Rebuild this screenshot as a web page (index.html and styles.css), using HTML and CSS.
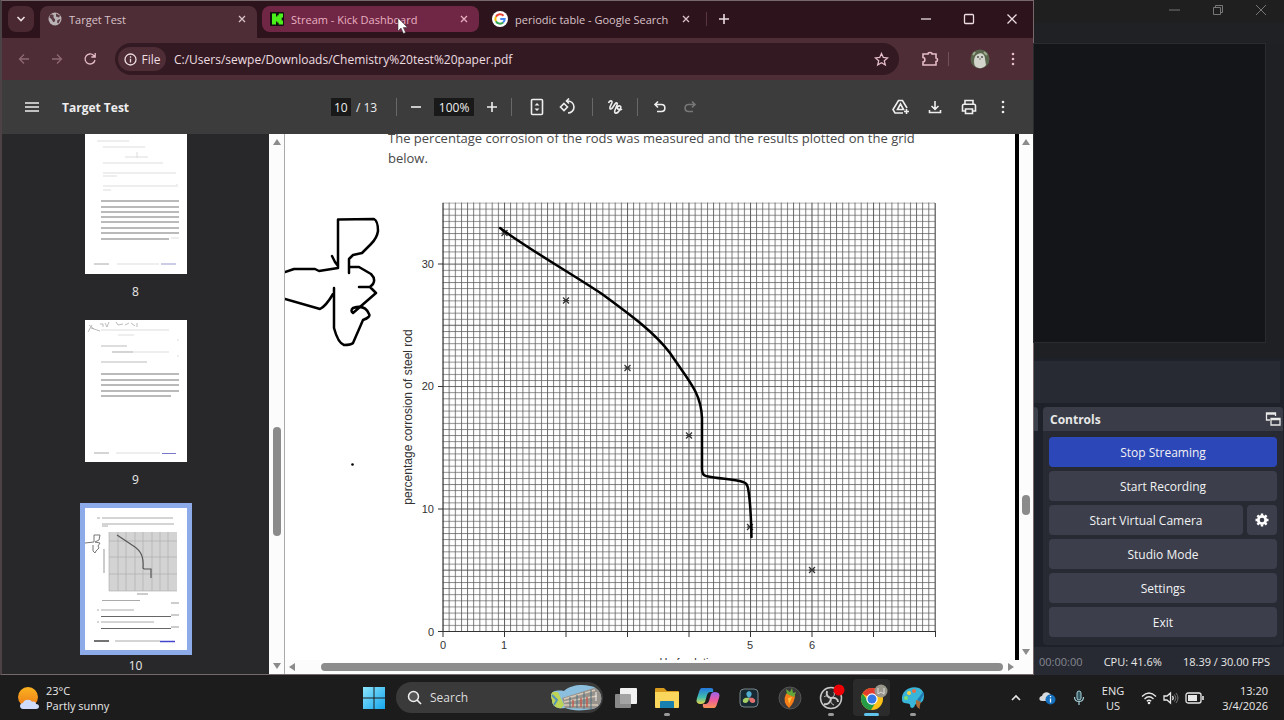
FILE: index.html
```
<!DOCTYPE html>
<html lang="en">
<head>
  <meta charset="UTF-8" />
  <meta name="viewport" content="width=device-width, initial-scale=1.0"/>
  <title>Target Test</title>
  <link rel="stylesheet" href="styles.css">
</head>
<body>
  <div class="desktop">
    <!-- browser window -->
    <main class="browser">
      <div class="tab-strip">
        <button class="tab-search" aria-label="Search tabs"><svg width="10" height="8" viewBox="0 0 10 8"><path d="M1.500 2l3.500 3.500L8.500 2" class="line2"/></svg></button>
        <div class="tab active">
          <svg width="14" height="14" viewBox="0 0 14 14"><circle cx="7" cy="7" r="6.500" fill="#b9b2b5"/><path d="M2 3c3-1 4 0 3.500 1.500S8 7 7 9s-2 1-3-1-2-2-2.500-2zM8 1.500l4 2-1 2-3-1zM9.500 8l3-1-2 4.500-1.500-1z" fill="#5b3a44"/></svg>
          <span class="tab-title">Target Test</span>
          <button class="tab-close" aria-label="Close tab"><svg width="8" height="8" viewBox="0 0 8 8"><path d="M1 1l6 6M7 1L1 7" class="line"/></svg></button>
        </div>
        <div class="tab hovered">
          <svg width="14" height="14" viewBox="0 0 14 14"><rect width="14" height="14" rx="1" fill="#111"/><path d="M2 1.500h4v3h1.300V3.300h1.400V1.500H13v4h-1.300v1.500h-1.200h1.200v1.500H13v4H8.700v-1.800H7.300V9.500H6v3H2z" fill="#4bef1a"/></svg>
          <span class="tab-title">Stream - Kick Dashboard</span>
          <button class="tab-close" aria-label="Close tab"><svg width="8" height="8" viewBox="0 0 8 8"><path d="M1 1l6 6M7 1L1 7" class="line"/></svg></button>
          <svg class="cursor" width="12" height="18" viewBox="0 0 12 18"><path d="M1 1v13l3-3 2.500 5.500 2-1L6.300 10.500H10.500z" fill="#fff" stroke="#333" stroke-width="0.500"/></svg>
        </div>
        <div class="tab">
          <svg width="16" height="16" viewBox="0 0 16 16"><circle cx="8" cy="8" r="8" fill="#fff"/><g fill="none" stroke-width="2"><path d="M11.500 4.700A4.700 4.700 0 0 0 3.900 5.800" stroke="#ea4335"/><path d="M3.900 5.800a4.700 4.700 0 0 0 0 4.400" stroke="#fbbc05"/><path d="M3.900 10.200a4.700 4.700 0 0 0 7.200 1.300" stroke="#34a853"/><path d="M11.100 11.500A4.700 4.700 0 0 0 12.700 8H8.300" stroke="#4285f4"/></g></svg>
          <span class="tab-title">periodic table - Google Search</span>
          <button class="tab-close" aria-label="Close tab"><svg width="8" height="8" viewBox="0 0 8 8"><path d="M1 1l6 6M7 1L1 7" class="line"/></svg></button>
        </div>
        <span class="tab-divider"></span>
        <button class="new-tab" aria-label="New tab"><svg width="12" height="12" viewBox="0 0 12 12"><path d="M6 1v10M1 6h10" class="line2"/></svg></button>
        <div class="window-buttons">
          <button aria-label="Minimize"><svg width="12" height="12" viewBox="0 0 12 12"><path d="M1 6h10" class="line"/></svg></button>
          <button aria-label="Maximize"><svg width="12" height="12" viewBox="0 0 12 12"><rect x="1.500" y="1.500" width="9" height="9" rx="1" class="line"/></svg></button>
          <button aria-label="Close"><svg width="12" height="12" viewBox="0 0 12 12"><path d="M1.500 1.500l9 9M10.500 1.500l-9 9" class="line"/></svg></button>
        </div>
      </div>

      <div class="address-row">
        <button class="nav dim" aria-label="Back"><svg width="12" height="12" viewBox="0 0 12 12"><path d="M11 6H1.500M6 1.500L1.500 6 6 10.500" class="line"/></svg></button>
        <button class="nav dim" aria-label="Forward"><svg width="12" height="12" viewBox="0 0 12 12"><path d="M1 6h9.500M6 1.500L10.500 6 6 10.500" class="line"/></svg></button>
        <button class="nav" aria-label="Reload"><svg width="14" height="14" viewBox="0 0 14 14"><path d="M12 8a5 5 0 1 1-1.300-4.500L12 4.800M12.200 1v4H8.300" class="line"/></svg></button>
        <div class="omnibox">
          <button class="file-chip"><svg width="13" height="13" viewBox="0 0 13 13"><circle cx="6.500" cy="6.500" r="5.500" class="line"/><path d="M6.500 5.800v3.700M6.500 3.300v1.400" class="line"/></svg>File</button>
          <input class="url" type="text" aria-label="Address" value="C:/Users/sewpe/Downloads/Chemistry%20test%20paper.pdf">
          <button class="star" aria-label="Bookmark"><svg width="15" height="15" viewBox="0 0 15 15"><path d="M7.500 1.500l1.800 4 4.300.4-3.300 2.900 1 4.200-3.800-2.200L3.700 13l1-4.200L1.400 5.900l4.300-.4z" class="line"/></svg></button>
        </div>
        <button class="nav" aria-label="Extensions"><svg width="18" height="16" viewBox="0 0 18 16"><path d="M2 3h5c0-2 4-2 4 0h4v4c2 0 2 3.500 0 3.500V14H2v-3c2.500 0 2.500-4.500 0-4.500z" class="line2"/></svg></button>
        <span class="address-divider"></span>
        <button class="nav avatar" aria-label="Profile"><svg width="20" height="20" viewBox="0 0 20 20"><circle cx="10" cy="10" r="9.500" fill="#59664d"/><path d="M5 17c-2-4-1-11 3-12 4-2 7 1 7 5l1 6c-3 4-8 4-11 1z" fill="#d3d5cc"/><path d="M3 6l2-3M14 3l3 3" stroke="#9dab8d" stroke-width="2"/><circle cx="8" cy="8" r=".9" fill="#444"/><circle cx="12" cy="8" r=".9" fill="#444"/><path d="M10 9v2" stroke="#777"/></svg></button>
        <button class="nav" aria-label="Menu"><svg width="4" height="16" viewBox="0 0 4 16"><g class="solid"><circle cx="2" cy="3" r="1.300"/><circle cx="2" cy="8" r="1.300"/><circle cx="2" cy="13" r="1.300"/></g></svg></button>
      </div>

      <div class="pdf-bar">
        <div class="pdf-left">
          <button class="tool" aria-label="Toggle sidebar"><svg width="14" height="12" viewBox="0 0 14 12"><path d="M0 2h14M0 6h14M0 10h14" class="line2"/></svg></button>
          <h1>Target Test</h1>
        </div>
        <div class="pdf-center">
          <input class="page-box" type="text" aria-label="Page number" value="10">
          <span class="page-total">/ 13</span>
          <span class="bar-divider"></span>
          <div class="tools zoom-tools">
            <button class="tool" aria-label="Zoom out"><svg width="12" height="12" viewBox="0 0 12 12"><path d="M1 6h10" class="line2"/></svg></button>
            <input class="zoom-box" type="text" aria-label="Zoom" value="100%">
            <button class="tool" aria-label="Zoom in"><svg width="12" height="12" viewBox="0 0 12 12"><path d="M1 6h10M6 1v10" class="line2"/></svg></button>
          </div>
          <span class="bar-divider"></span>
          <div class="tools view-tools">
            <button class="tool" aria-label="Fit to page"><svg width="14" height="18" viewBox="0 0 14 18"><rect x="1.500" y="1.500" width="11" height="15" rx="1" class="line2"/><path d="M4.500 7.500L7 5l2.500 2.500zM4.500 10.500L7 13l2.500-2.500z" class="solid"/></svg></button>
            <button class="tool" aria-label="Rotate"><svg width="18" height="18" viewBox="0 0 18 18"><path d="M6 5.500L9.500 9 6 12.500 2.500 9z" class="line2"/><path d="M9 3c4-.5 7 2.500 7 6s-3 6-6 6M11 .5L8.500 3 11 5.500" class="line2"/></svg></button>
          </div>
          <span class="bar-divider"></span>
          <div class="tools">
            <button class="tool" aria-label="Draw"><svg width="16" height="16" viewBox="0 0 16 16"><path d="M1.500 4C2.500 1.500 5.500 1 5 3.500L3 8c-.5 3 1.500 2.500 3 0l2-3c1.500-2 3-1 2 1L8 11c-1.500 4 2 4 4 1s2.500-4.500 1-5-4 1.500-2 3 3 1 4 0" class="line2"/></svg></button>
          </div>
          <span class="bar-divider"></span>
          <div class="tools">
            <button class="tool" aria-label="Undo"><svg width="14" height="14" viewBox="0 0 14 14"><path d="M5 1.500L2 4.500l3 3M2 4.500h6.500c4.500 0 4.500 7 0 7H4" class="line2"/></svg></button>
            <button class="tool dim" aria-label="Redo"><svg width="14" height="14" viewBox="0 0 14 14"><path d="M9 1.500l3 3-3 3M12 4.500H5.500c-4.500 0-4.500 7 0 7H10" class="line2"/></svg></button>
          </div>
        </div>
        <div class="pdf-right">
          <button class="tool" aria-label="Save to Drive"><svg width="18" height="16" viewBox="0 0 18 16"><path d="M11 14H3L1 10.500 6.500 1.500h4L15 9M5.500 10.500l3-5.500 3 5.500zM14.500 10v5M12 12.500h5" class="line2"/></svg></button>
          <button class="tool" aria-label="Download"><svg width="14" height="14" viewBox="0 0 14 14"><path d="M7 1v8M3.500 6L7 9.300 10.500 6M1.500 10v2.500h11V10" class="line2"/></svg></button>
          <button class="tool" aria-label="Print"><svg width="16" height="16" viewBox="0 0 16 16"><path d="M4 5V1.500h8V5M4 12H1.500V7c0-1 .7-1.800 1.500-1.800h10c.8 0 1.500.8 1.500 1.800v5H12M4.500 10h7v4.500h-7z" class="line2"/></svg></button>
          <button class="tool" aria-label="More actions"><svg width="4" height="14" viewBox="0 0 4 14"><g class="solid"><circle cx="2" cy="2" r="1.300"/><circle cx="2" cy="7" r="1.300"/><circle cx="2" cy="12" r="1.300"/></g></svg></button>
        </div>
      </div>

      <div class="viewer">
        <aside class="thumbs">
          <div class="thumb">
            <svg class="sheet" width="102" height="142" viewBox="0 0 102 142">
              <path d="M12 9h32M18 15h42M52 20v6M40 25h23M18 31h60M18 41h73M18 44h14M18 54h73M18 58h8M92 52v3" stroke="#ddd" fill="none"/>
              <path d="M16 69h78M16 75h78M16 80h78M16 85h78M16 90h78M16 96h78M16 101h78M16 107h68" stroke="#777" fill="none" stroke-width="1.200"/>
              <path d="M86 106h8M32 132h42" stroke="#ddd"/><path d="M9 132h15" stroke="#aaa"/><path d="M76 132h15" stroke="#99c"/>
            </svg>
            <span>8</span>
          </div>
          <div class="thumb">
            <svg class="sheet" width="102" height="142" viewBox="0 0 102 142">
              <path d="M4 5l5 4M3 12l4-7M6 8l9 3M15 4h3v3M20 3l2 4 2-5M31 2l2 3 5-1M40 5l4-2M46 3l4 3M52 3v4" stroke="#aaa" fill="none" stroke-width="0.800"/>
              <path d="M16 10h68M33 15h16M27 32h57M92 20h2M92 36h2" stroke="#ddd"/><path d="M16 26h26M27 32h21M16 42h46" stroke="#bbb"/>
              <path d="M16 54h78M16 60h78M16 65h78M16 71h78M16 76h70" stroke="#777" stroke-width="1.200"/>
              <path d="M31 133h44" stroke="#ddd"/><path d="M9 133h15" stroke="#aaa"/><path d="M77 133.500h14" stroke="#77c"/>
            </svg>
            <span>9</span>
          </div>
          <div class="thumb current">
            <svg class="sheet" width="102" height="142" viewBox="0 0 102 142">
              <path d="M12 10h3M17 10h71M17 16h72M17 18h6M17 92.500h38M12 102h2M16 102h33M12 114h2M16 114h53M30 133h45" stroke="#aaa"/>
              <rect x="24" y="24" width="68" height="59" fill="#d3d3d3"/>
              <path d="M24 24v59h68M33 24v59M41 24v59M50 24v59M58 24v59M67 24v59M75 24v59M83 24v59M24 33h68M24 49h68M24 66h68" stroke="#aaa" fill="none" stroke-width="0.600"/>
              <path d="M32 27l15 10c8 5 12 10 11 23l1 1h7v9" fill="none" stroke="#555" stroke-width="1.200"/>
              <path d="M0 35l9-1V27h6l-1 5-4 2 5 1-2 3 1 2-3 3-1 2-2-2V37" fill="none" stroke="#777"/>
              <path d="M19 41v24M52 86h11M86 95h8M86 107h8M86 119h8" stroke="#999"/>
              <path d="M16 108.500h70M16 120.500h70" stroke="#666"/><path d="M9 133h15" stroke="#444" stroke-width="1.500"/><path d="M75 133.500h15" stroke="#44c" stroke-width="1.500"/>
            </svg>
            <span>10</span>
          </div>
        </aside>
        <div class="scroll-y side-scroll">
          <svg class="arrow" width="10" height="16" viewBox="0 0 10 16"><path d="M5 5l4 6H1z"/></svg>
          <span class="gap-a"></span><span class="handle"></span><span class="gap-b"></span>
          <svg class="arrow" width="10" height="16" viewBox="0 0 10 16"><path d="M5 11l4-6H1z"/></svg>
        </div>
        <section class="document">
          <div class="doc-row">
            <article class="page">
              <p>The percentage corrosion of the rods was measured and the results plotted on the grid<br>below.</p>
              <svg class="chart" width="730" height="489" viewBox="285 171 730 489">
                <defs>
                  <pattern id="grid" x="442.500" y="202.500" width="6.150" height="6.121" patternUnits="userSpaceOnUse"><path d="M0 .5h6.150" stroke="#707070" stroke-width=".8"/><path d="M.5 0v6.121" stroke="#585858" stroke-width=".8"/></pattern>
                  <path id="cross" d="M-3-3l6 6M3-3l-6 6M-3 0h6" stroke="#333" stroke-width="1.200"/>
                </defs>
                <rect x="442.500" y="202.500" width="492.500" height="429" fill="url(#grid)"/>
                <path d="M443 203v434M438 631.500h497.500M935.500 631v6M438 264h5M438 386.500h5M438 509h5M504.500 631v6M566 631v6M627.500 631v6M689 631v6M750.500 631v6M812 631v6M873.500 631v6" stroke="#333" fill="none"/>
                <path d="M935.500 203v428" stroke="#777"/>
                <path d="M504.500 203v428M566 203v428M627.500 203v428M689 203v428M750.500 203v428M812 203v428M873.500 203v428M443 264h492M443 325h492M443 386.500h492M443 448h492M443 509h492M443 570h492" stroke="#444" stroke-opacity=".4"/>
                <g class="axis-y"><text x="434" y="268">30</text><text x="434" y="390">20</text><text x="434" y="513">10</text><text x="434" y="636">0</text></g>
                <g class="axis-x"><text x="443" y="649">0</text><text x="504" y="649">1</text><text x="750" y="649">5</text><text x="812" y="649">6</text><text x="687" y="666">pH of solution</text></g>
                <text class="axis-name" transform="translate(412 417) rotate(-90)">percentage corrosion of steel rod</text>
                <use href="#cross" x="504.500" y="233"/><use href="#cross" x="566" y="300.500"/><use href="#cross" x="627.500" y="368"/><use href="#cross" x="689" y="435.500"/><use href="#cross" x="750" y="527"/><use href="#cross" x="812" y="570"/>
                <path class="ink" d="M500 228C530 250 572 274 602 294C632 316 655 333 670 353C688 380 701 392 702 418V469Q702 475 706 476C720 479 732 479 743 482Q747 483 748 488C751 505 751 520 751.500 537"/>
                <path class="ink" d="M338 268V219.500L374 219Q378 221 378 231Q377 238 371 244L362 253L353 255L349 259V273M349 267H359L371 274Q376 279 373 284L370 287H359M370 287L376 293L353 313Q350 311 353 308Q365 304 369 314Q371 317 363 320L353 343Q351 345 344 345Q338 343 334 328V288M332 256L335 262L338 266V268L319 271L315 269H294L285 272M285 299L320 309Q326 306 333 294"/>
                <circle cx="352.500" cy="464.500" r="1.300"/>
              </svg>
            </article>
            <div class="scroll-y doc-scroll">
              <svg class="arrow" width="10" height="16" viewBox="0 0 10 16"><path d="M5 5l4 6H1z"/></svg>
              <span class="gap-a"></span><span class="handle"></span><span class="gap-b"></span>
              <svg class="arrow" width="10" height="16" viewBox="0 0 10 16"><path d="M5 11l4-6H1z"/></svg>
            </div>
          </div>
          <div class="scroll-x">
            <svg class="arrow" width="16" height="10" viewBox="0 0 16 10"><path d="M4 5l6-4v8z"/></svg>
            <span class="handle"></span>
            <svg class="arrow" width="16" height="10" viewBox="0 0 16 10"><path d="M11 5L5 1v8z"/></svg>
          </div>
        </section>
      </div>
    </main>

    <!-- streaming window behind it -->
    <aside class="studio">
      <div class="studio-title">
        <button aria-label="Minimize"><svg width="12" height="12" viewBox="0 0 12 12"><path d="M0 6h11" class="line"/></svg></button>
        <button aria-label="Restore"><svg width="12" height="12" viewBox="0 0 12 12"><path d="M1.500 3.500h7v7h-7zM3.500 3V1.500h7v7H9" class="line"/></svg></button>
        <button aria-label="Close"><svg width="12" height="12" viewBox="0 0 12 12"><path d="M1 1l10 10M11 1L1 11" class="line"/></svg></button>
      </div>
      <div class="preview"><div class="preview-screen"></div></div>
      <div class="source-bar"></div>
      <div class="docks">
        <div class="dock-edge"></div>
        <section class="dock">
          <header>
            <h2>Controls</h2>
            <button class="float" aria-label="Undock"><svg width="16" height="16" viewBox="0 0 16 16"><path d="M5 9H1.500V2h9v3M1.500 3h9M6 7.500h9v6.500H6zM6 8.500h9" class="line"/></svg></button>
          </header>
          <div class="controls">
            <button class="primary">Stop Streaming</button>
            <button>Start Recording</button>
            <div class="camera-row">
              <button>Start Virtual Camera</button>
              <button class="gear" aria-label="Camera settings"><svg width="14" height="14" viewBox="0 0 14 14"><circle cx="7" cy="7" r="3.700" fill="none" stroke="#fff" stroke-width="2.800"/><path d="M7 .5v2M7 11.500v2M.5 7h2M11.500 7h2M2.400 2.400l1.400 1.400M10.200 10.200l1.400 1.400M2.400 11.600l1.400-1.400M10.200 3.800l1.400-1.400" stroke="#fff" stroke-width="2.400"/></svg></button>
            </div>
            <button>Studio Mode</button>
            <button>Settings</button>
            <button>Exit</button>
          </div>
        </section>
      </div>
      <footer class="status">
        <span class="time">00:00:00</span>
        <span>CPU: 41.6%</span>
        <span>18.39 / 30.00 FPS</span>
      </footer>
    </aside>
  </div>

  <footer class="taskbar">
    <button class="weather">
      <svg width="22" height="24" viewBox="0 0 22 24"><defs><linearGradient id="sun" x2="0" y2="1"><stop stop-color="#fbb321"/><stop offset="1" stop-color="#ec7b18"/></linearGradient></defs><circle cx="10" cy="11" r="10" fill="url(#sun)"/><path d="M5 23c-4 0-4-6 0-6 1-4 8-4 9-1 2-1 4 0 4 2 4 0 4 5 0 5z" fill="#cfdcfb"/></svg>
      <span>23°C<br>Partly sunny</span>
    </button>
    <nav class="apps">
      <button class="app start" aria-label="Start"><svg width="24" height="24" viewBox="0 0 24 24"><defs><linearGradient id="win" x2="1" y2="1"><stop stop-color="#8be4fb"/><stop offset="1" stop-color="#15a5ee"/></linearGradient></defs><path d="M1 1h10.500v10.500H1zM12.500 1H23v10.500H12.500zM1 12.500h10.500V23H1zM12.500 12.500H23V23H12.500z" fill="url(#win)"/></svg></button>
      <label class="search">
        <svg width="15" height="15" viewBox="0 0 15 15"><circle cx="6.500" cy="6.500" r="5" fill="#555" stroke="#eee" stroke-width="1.500"/><path d="M10 10l4 4" stroke="#eee" stroke-width="1.700"/></svg>
        <input type="text" placeholder="Search" aria-label="Search">
        <svg width="52" height="26" viewBox="0 0 52 26"><defs><clipPath id="scene"><path d="M2 15C-2 5 8 5 14 6 20 0 32-1 40 1c14 2 15 20 3 23-12 2-20 2-28-1C8 24 2 22 2 15z"/></clipPath></defs><g clip-path="url(#scene)"><path d="M0 0h52v26H0z" fill="#8bbfdd"/><path d="M12 13L44 3l8 2v19l-37-1z" fill="#98928c"/><path d="M14 14l31-9M14 17l33-6M14 20h34" stroke="#d6c9b7" stroke-width="1.500"/><path d="M20 12v11M27 10v13M34 7v17M41 5v19" stroke="#4f6f7d"/><path d="M23 15v7M31 13v9M37 12v10" stroke="#c05d51" stroke-width="1.500"/><path d="M0 7h8l6 13-5 6H0z" fill="#bed457"/><path d="M2 10l5 5-3 5" fill="none" stroke="#5794bc" stroke-width="2"/></g><path d="M46 7v9" stroke="#eee"/></svg>
      </label>
      <button class="app" aria-label="Task view"><svg width="24" height="24" viewBox="0 0 24 24"><rect x="6" y="2" width="17" height="16" rx="1" fill="#f1f1f1"/><rect x="1" y="8" width="16" height="14" rx="1" fill="#999" fill-opacity=".88"/></svg></button>
      <button class="app running" aria-label="File Explorer"><svg width="24" height="24" viewBox="0 0 24 24"><path d="M0 3q0-1 1-1h8l3 3h11q1 0 1 1v4H0z" fill="#d99b1d"/><path d="M0 6h24v15q0 1-1 1H1q-1 0-1-1z" fill="#fbd65c"/><path d="M5 22v-6q0-1 1-1h12q1 0 1 1v6z" fill="#197fae"/></svg></button>
      <button class="app" aria-label="Copilot"><svg width="24" height="24" viewBox="0 0 24 24"><defs><linearGradient id="co1" x2="0" y2="1"><stop stop-color="#2378df"/><stop offset=".6" stop-color="#43bfac"/><stop offset="1" stop-color="#e9d345"/></linearGradient><linearGradient id="co2" x2="0" y2="1"><stop stop-color="#9765f0"/><stop offset=".5" stop-color="#ed5a9d"/><stop offset="1" stop-color="#fa9355"/></linearGradient></defs><path d="M6 2h9q3 0 2 4h-3q-2 0-3 3l-2 7q-1 2-4 2-6 0-4-6l2-6q1-4 3-4z" fill="url(#co1)"/><path d="M18 22H9q-3 0-2-4h3q2 0 3-3l2-7q1-2 4-2 6 0 4 6l-2 6q-1 4-3 4z" fill="url(#co2)"/></svg></button>
      <button class="app" aria-label="DaVinci Resolve"><svg width="20" height="20" viewBox="0 0 20 20"><rect x="1" y="1" width="18" height="18" rx="4" fill="#172a33" stroke="#7a878b"/><path d="M10 10C6 7 7 4 10 3c3 1 4 4 0 7z" fill="#51aed0"/><path d="M10 10c0 5-4 6-6 4-1-3 2-5 6-4z" fill="#a4ce68"/><path d="M10 10c4-1 7 1 6 4-2 2-6 1-6-4z" fill="#df716e"/></svg></button>
      <button class="app" aria-label="FL Studio"><svg width="24" height="24" viewBox="0 0 24 24"><circle cx="12" cy="12" r="11" fill="#39393b" stroke="#555"/><path d="M8 8q4-4 9 1 0 7-6 13-7-6-3-14z" fill="#f77d18"/><path d="M10 12l1 6 3-7z" fill="#ffc43b"/><path d="M9 8l-1-5 4 3 2-4 1 5 3-1-2 5z" fill="#64a83a"/></svg></button>
      <button class="app running" aria-label="OBS Studio"><svg width="24" height="28" viewBox="0 0 24 28"><circle cx="12" cy="14" r="10.500" fill="#272727" stroke="#c8c8c8" stroke-width="1.500"/><path d="M8 7c-1 4 1 7 4 7 4-1 7 1 7 4M12 14c0 4-3 7-7 6" fill="none" stroke="#c8c8c8" stroke-width="2"/><path d="M5 13c2-2 5-1 7 1M15 8c1 3 0 5-3 6M15 21c-3-1-4-4-3-7" fill="none" stroke="#c8c8c8"/><circle cx="20" cy="6" r="5.500" fill="#ed0005"/></svg></button>
      <button class="app running selected" aria-label="Chrome"><svg width="24" height="28" viewBox="0 0 24 28"><circle cx="12" cy="15" r="11" fill="#fbc116"/><path d="M12 15L2.500 9.500A11 11 0 0 1 21.500 9.500z" fill="#e33b2e"/><path d="M2.500 9.500A11 11 0 0 0 11 26l5.500-9L8 17z" fill="#259b48"/><circle cx="12" cy="15" r="5.700" fill="#fff"/><circle cx="12" cy="15" r="4.500" fill="#3477e5"/><circle cx="21" cy="7" r="6.500" fill="#98968a"/><path d="M18 4v6l3-2 3 2V4" fill="none" stroke="#ddd"/></svg></button>
      <button class="app running" aria-label="Paint"><svg width="24" height="24" viewBox="0 0 24 24"><path d="M1 14C0 4 10-1 18 2c7 3 6 14 1 15-3 1-4 0-5 2-1 4-5 4-5 0 0-3-8 0-8-5z" fill="#38b5d8"/><circle cx="5" cy="12" r="2" fill="#81e06d"/><circle cx="8" cy="7" r="2" fill="#f7cf42"/><circle cx="13" cy="5" r="2" fill="#e96c45"/><path d="M22 6l-6 8 3 2 4-8z" fill="#217bb4"/><path d="M15 14l5 2q-2 5-1 7-5-2-4-9z" fill="#a66a36"/></svg></button>
    </nav>
    <div class="tray">
      <button aria-label="Hidden icons"><svg width="12" height="10" viewBox="0 0 12 10"><path d="M2 7l4-4 4 4" class="line2"/></svg></button>
      <button aria-label="OneDrive"><svg width="17" height="14" viewBox="0 0 17 14"><path d="M3 10c-4 0-3-5 0-5 1-5 8-5 9 0 4 0 4 5 1 5z" fill="#d7d9dc"/><circle cx="11.500" cy="8.500" r="5" fill="#1570bd"/><path d="M11.500 7.500v4M11.500 5v1.300" stroke="#fff" stroke-width="1.300"/></svg></button>
      <button aria-label="Microphone"><svg width="12" height="16" viewBox="0 0 12 16"><rect x="4" y="1" width="4" height="9" rx="2" fill="#345861" stroke="#a4d0d8"/><path d="M1.500 7c0 6 9 6 9 0M6 11.500V15" fill="none" stroke="#a4d0d8" stroke-width="1.200"/></svg></button>
      <button class="lang">ENG<br>US</button>
      <button class="quick" aria-label="Network, volume, battery">
        <svg width="16" height="14" viewBox="0 0 16 14"><path d="M1 5.500q7-7 14 0M3.500 8q4.500-4.500 9 0M5.800 10.300q2.200-2.200 4.400 0" class="line"/><circle cx="8" cy="12" r="1.300" class="solid"/></svg>
        <svg width="16" height="14" viewBox="0 0 16 14"><path d="M1 5h3l3.500-3v10L4 9H1zM9.500 5q1.500 2 0 4" class="line"/><path d="M11.500 3.500q3 3.500 0 7M13 2q4 5 0 10" fill="none" stroke="#777"/></svg>
        <svg width="20" height="12" viewBox="0 0 20 12"><rect x="1" y="1" width="15" height="10" rx="2" class="line"/><rect x="3" y="3" width="9" height="6" class="solid"/><path d="M18 4v4" class="line2"/></svg>
      </button>
      <button class="clock">13:20<br>3/4/2026</button>
    </div>
  </footer>
</body>
</html>
```
FILE: styles.css
```
* {
  box-sizing: border-box;
}
body {
  margin: 0;
  height: 100vh;
  display: flex;
  flex-direction: column;
  overflow: hidden;
  background: #1c1c1c;
  color: #e8e8e8;
  font-family: "Open Sans", "Noto Sans", sans-serif;
  font-size: 12px;
}
button {
  display: flex;
  align-items: center;
  justify-content: center;
  padding: 0;
  border: none;
  background: none;
  color: inherit;
  font: inherit;
  cursor: pointer;
}
input {
  min-width: 0;
  padding: 0;
  border: none;
  outline: none;
  background: none;
  color: inherit;
  font: inherit;
}
svg {
  display: block;
  flex-shrink: 0;
}
h1, h2, p {
  margin: 0;
}
.line, .line2 {
  fill: none;
  stroke: currentColor;
  stroke-width: 1.3;
}
.line2 {
  stroke-width: 1.6;
}
.solid {
  fill: currentColor;
}
.desktop {
  flex: 1;
  min-height: 0;
  display: flex;
}

/* browser */
.browser {
  flex: 1;
  min-width: 0;
  display: flex;
  flex-direction: column;
  border: 1px solid #77686c;
  border-left: 2px solid #4a4244;
}
.tab-strip {
  height: 37px;
  display: flex;
  align-items: flex-start;
  padding: 5px 0 0 6px;
  background: #2d131b;
  color: #eddde1;
}
.tab-search {
  width: 26px;
  height: 26px;
  margin-right: 6px;
  border-radius: 8px;
  background: #4a2933;
}
.tab {
  position: relative;
  width: 217px;
  height: 26px;
  margin-right: 5px;
  padding: 0 11px 0 8px;
  display: flex;
  align-items: center;
  gap: 7px;
  border-radius: 8px;
  font-size: 11px;
  color: #d9c2c9;
}
.tab.active {
  height: 32px;
  padding-bottom: 6px;
  border-radius: 8px 8px 0 0;
  background: #4e2d36;
}
.tab.hovered {
  background: #702745;
  color: #e9afc1;
}
.tab-title {
  flex: 1;
  white-space: nowrap;
}
.cursor {
  position: absolute;
  left: 135px;
  top: 11px;
}
.tab-divider {
  width: 1px;
  height: 14px;
  margin-top: 6px;
  background: #5a3541;
}
.new-tab {
  width: 34px;
  height: 26px;
}
.window-buttons {
  margin-left: auto;
  display: flex;
}
.window-buttons button {
  width: 43px;
  height: 26px;
}
.address-row {
  height: 42px;
  display: flex;
  align-items: center;
  padding: 0 4px 0 5px;
  background: #4e2d36;
  color: #e5bcc8;
}
.nav {
  width: 33px;
  height: 32px;
}
.nav.dim {
  color: #8d6974;
}
.omnibox {
  flex: 1;
  height: 32px;
  margin: 0 14px 0 9px;
  padding: 0 10px 0 3px;
  display: flex;
  align-items: center;
  border-radius: 16px;
  background: #331a22;
}
.file-chip {
  height: 24px;
  width: 48px;
  gap: 5px;
  border-radius: 12px;
  background: #4e2d36;
  color: #eddde1;
}
.url {
  flex: 1;
  margin-left: 8px;
  color: #eddde1;
}
.address-divider {
  width: 1px;
  height: 14px;
  background: #70505a;
  margin: 0 14px 0 2px;
}
.pdf-bar {
  height: 54px;
  padding: 0 18px;
  display: grid;
  grid-template-columns: 1fr auto 1fr;
  align-items: center;
  background: #3c3c3c;
  color: #eee;
}
.pdf-left, .pdf-center, .pdf-right, .tools {
  display: flex;
  align-items: center;
}
.pdf-left {
  gap: 18px;
}
.pdf-center {
  padding-left: 8px;
}
h1 {
  font-size: 12px;
}
.tool {
  width: 24px;
  height: 24px;
}
.tool.dim {
  color: #777;
}
.page-box, .zoom-box {
  height: 18px;
  background: #191919;
  text-align: center;
}
.page-box {
  width: 20px;
}
.page-total {
  margin: 0 19px 0 5px;
}
.zoom-box {
  width: 40px;
}
.bar-divider {
  width: 1px;
  height: 18px;
  background: #686868;
}
.tools {
  gap: 6px;
  padding: 0 10px;
}
.zoom-tools {
  padding: 0 7px;
}
.view-tools {
  padding: 0 13px;
}
.pdf-right {
  justify-content: flex-end;
  gap: 10px;
}
.viewer {
  flex: 1;
  min-height: 0;
  display: flex;
  background: #28282a;
}
.thumbs {
  flex: 0 1 267px;
  display: flex;
  flex-direction: column;
  align-items: center;
  overflow: hidden;
}
.thumb {
  flex-shrink: 0;
  height: 188px;
  text-align: center;
  line-height: 36px;
}
.thumbs .thumb:first-child {
  margin-top: -2px;
}
.thumbs .thumb:last-child {
  line-height: 32px;
}
.sheet {
  background: #fff;
}
.current .sheet {
  outline: 5px solid #8cabe8;
}
.scroll-y {
  display: flex;
  flex-direction: column;
  align-items: center;
  width: 16px;
  background: #fcfcfc;
}
.scroll-y .handle {
  width: 8px;
}
.handle {
  border-radius: 4px;
  background: #8b8b8b;
}
.arrow {
  fill: #8b8b8b;
}
.side-scroll {
  border-right: 1px solid #aaa;
}
.side-scroll .gap-a {
  flex: 277;
}
.side-scroll .handle {
  flex: 109;
}
.side-scroll .gap-b {
  flex: 122;
}
.document {
  flex: 1;
  min-width: 0;
  display: flex;
  flex-direction: column;
  background: #fcfcfc;
}
.doc-row {
  flex: 1;
  min-height: 0;
  display: flex;
}
.page {
  flex: 1;
  min-width: 0;
  overflow: hidden;
  display: flex;
  flex-direction: column;
  border-right: 4px solid #000;
  background: #fff;
}
.page p {
  height: 37px;
  margin-left: 103px;
  display: flow-root;
  color: #484848;
  font-size: 13px;
  line-height: 20px;
  white-space: nowrap;
}
.page p::before {
  content: "";
  display: block;
  margin-top: -6px;
}
.chart text {
  font-family: "Liberation Sans", Arial, sans-serif;
  font-size: 11px;
  fill: #333;
}
.chart .axis-name {
  font-size: 12px;
}
.axis-y {
  text-anchor: end;
}
.axis-x, .axis-name {
  text-anchor: middle;
}
.ink {
  fill: none;
  stroke: #000;
  stroke-width: 2.5;
  stroke-linecap: round;
  stroke-linejoin: round;
}
.doc-scroll {
  width: 14px;
}
.doc-scroll .gap-a {
  flex: 345;
}
.doc-scroll .handle {
  flex: 20;
}
.doc-scroll .gap-b {
  flex: 129;
}
.scroll-x {
  height: 14px;
  display: flex;
  align-items: center;
  padding-right: 14px;
}
.scroll-x .handle {
  flex: 1;
  height: 8px;
  margin-left: 20px;
}

/* streaming app */
.studio {
  flex: 0 0 250px;
  display: flex;
  flex-direction: column;
  background: #1e202a;
}
.studio-title {
  height: 44px;
  display: flex;
  justify-content: flex-end;
  align-items: flex-start;
  padding-right: 2px;
  background: linear-gradient(#1f1f1f 22px, #1f2124 24px);
  color: #777;
}
.studio-title button {
  width: 43px;
  height: 20px;
}
.studio-title .line {
  stroke-width: 1;
}
.preview {
  flex: 1;
  display: flex;
  padding: 0 4px 16px 0;
  background: #1e2023;
}
.preview-screen {
  flex: 1;
  margin-right: 15px;
  background: #141518;
  outline: 1px solid #292b2f;
}
.source-bar {
  height: 42px;
  margin: 3px 4px 4px 0;
  background: #272a33;
}
.docks {
  display: flex;
  gap: 5px;
  padding-right: 1px;
}
.dock-edge {
  width: 4px;
  height: 24px;
  border-radius: 0 4px 0 0;
  background: #3c404b;
}
.dock {
  flex: 1;
  background: #272a33;
  border-radius: 4px;
}
.dock header {
  height: 24px;
  display: flex;
  align-items: center;
  justify-content: space-between;
  padding: 0 2px 0 7px;
  background: #3a3d47;
  border-radius: 4px 4px 0 0;
}
h2 {
  font-size: 12px;
}
.controls {
  display: flex;
  flex-direction: column;
  gap: 4px;
  padding: 6px 6px 8px;
}
.controls button {
  height: 30px;
  border-radius: 4px;
  background: #3c3f4b;
  color: #f2f2f4;
}
.controls .primary {
  background: #2c47b8;
}
.camera-row {
  display: flex;
  gap: 4px;
}
.camera-row button {
  flex: 1;
}
.camera-row .gear {
  flex: 0 0 30px;
}
.status {
  height: 28px;
  margin-top: 2px;
  display: flex;
  align-items: center;
  justify-content: space-between;
  padding: 0 14px 0 5px;
  background: #272a33;
  font-size: 11px;
  white-space: nowrap;
}
.status .time {
  color: #858791;
}

/* taskbar */
.taskbar {
  height: 45px;
  display: grid;
  grid-template-columns: 1fr auto 1fr;
  align-items: center;
  padding: 0 16px 0 18px;
  background: #1c1c1c;
  font-size: 11px;
  line-height: 15px;
}
.weather {
  justify-self: start;
  gap: 6px;
  text-align: left;
}
.apps {
  display: flex;
  align-items: center;
  gap: 4px;
}
.app {
  position: relative;
  width: 37px;
  height: 37px;
  border-radius: 4px;
}
.app svg {
  overflow: visible;
}
.app.selected {
  background: #2b2b2b;
}
.running::after {
  content: "";
  position: absolute;
  bottom: 0;
  width: 6px;
  height: 3px;
  border-radius: 2px;
  background: #999;
}
.selected::after {
  width: 15px;
  background: #60c3ec;
}
.search {
  width: 207px;
  height: 31px;
  display: flex;
  align-items: center;
  gap: 8px;
  padding: 0 1px 0 11px;
  border-radius: 16px;
  background: #3a3a3a;
  font-size: 12px;
}
.search input {
  flex: 1;
}
.search input::placeholder {
  color: #ddd;
}
.tray {
  justify-self: end;
  display: flex;
  align-items: center;
  gap: 17px;
}
.quick {
  gap: 6px;
}
.clock {
  text-align: right;
}
```
